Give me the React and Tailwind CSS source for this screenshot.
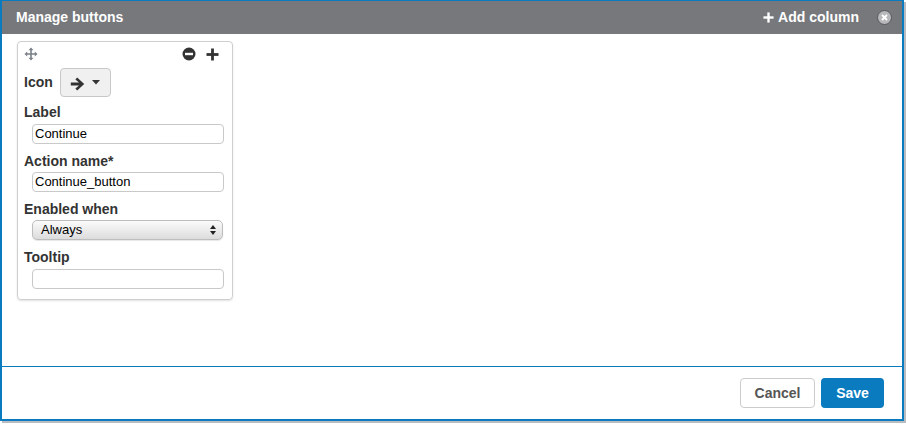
import React from "react";

const font = { fontFamily: '"Liberation Sans", Arial, sans-serif' };

function MoveIcon() {
  return (
    <svg width="14" height="14" viewBox="0 0 14 14" fill="#7a8088">
      <path d="M7 0.5 L9.5 3.2 H7.8 V6.2 H10.8 V4.5 L13.5 7 L10.8 9.5 V7.8 H7.8 V10.8 H9.5 L7 13.5 L4.5 10.8 H6.2 V7.8 H3.2 V9.5 L0.5 7 L3.2 4.5 V6.2 H6.2 V3.2 H4.5 Z" />
    </svg>
  );
}

function MinusCircle() {
  return (
    <svg width="14" height="14" viewBox="0 0 14 14">
      <circle cx="7" cy="7" r="6.5" fill="#333" />
      <rect x="3" y="5.8" width="8" height="2.4" fill="#fff" />
    </svg>
  );
}

function Plus({ color = "#333", size = 13 }) {
  return (
    <svg width={size} height={size} viewBox="0 0 13 13" fill={color}>
      <rect x="5.1" y="0.5" width="2.8" height="12" />
      <rect x="0.5" y="5.1" width="12" height="2.8" />
    </svg>
  );
}

function ArrowRight() {
  return (
    <svg width="15" height="14" viewBox="0 0 15 14" fill="#333">
      <path d="M7.2 0.6 L14.2 7 L7.2 13.4 L5.4 11.6 L9 8.4 H0.8 V5.6 H9 L5.4 2.4 Z" />
    </svg>
  );
}

export default function App() {
  return (
    <div className="w-[906px] h-[424px] bg-white relative" style={font}>
      <div className="w-[904px] h-[421px] border-2 border-t border-[#0b7bc0] bg-white flex flex-col shadow-[2px_2px_0_#b9bcc0]">
        <div className="h-[33px] bg-[#76787c] flex items-center pl-[14px] pr-[10px] shrink-0">
          <div className="text-white font-bold text-[14px]">Manage buttons</div>
          <div className="ml-auto flex items-center">
            <div className="flex items-center gap-[4px] text-white font-bold text-[14px]">
              <Plus color="#fff" size={11} />
              <span>Add column</span>
            </div>
            <div className="ml-[18px] w-[15px] h-[15px] rounded-full bg-[#b7b8ba] border border-[#55575b] flex items-center justify-center">
              <svg width="7" height="7" viewBox="0 0 7 7" stroke="#fff" strokeWidth="1.8">
                <path d="M1 1 L6 6 M6 1 L1 6" />
              </svg>
            </div>
          </div>
        </div>
        <div className="flex-1 pl-[15px] pt-[7px]">
          <div className="w-[216px] h-[259px] border border-[#cfcfcf] rounded-[4px] shadow-[0_1px_2px_rgba(0,0,0,0.12)] px-[6px] pt-[5px]">
            <div className="flex items-center h-[14px]">
              <MoveIcon />
              <div className="ml-auto flex items-center gap-[10px] pr-[7px]">
                <MinusCircle />
                <Plus />
              </div>
            </div>
            <div className="flex items-center mt-[7px]">
              <span className="text-[14px] font-bold text-[#333]">Icon</span>
              <div className="ml-[7px] w-[51px] h-[29px] bg-[#f0f0f0] border border-[#c8c8c8] rounded-[4px] flex items-center pl-[9px]">
                <div className="mt-[2px]"><ArrowRight /></div>
                <svg className="ml-[7px]" width="8" height="5" viewBox="0 0 8 5" fill="#333">
                  <path d="M0 0 H8 L4 4.5 Z" />
                </svg>
              </div>
            </div>
            <div className="text-[14px] font-bold text-[#333] mt-[7px] leading-[17px]">Label</div>
            <div className="ml-[8px] mt-[3px] w-[192px] h-[20px] border border-[#c9c9c9] rounded-[4px] text-[13px] text-black flex items-center px-[2px]">Continue</div>
            <div className="text-[14px] font-bold text-[#333] mt-[9px] leading-[17px]">Action name*</div>
            <div className="ml-[8px] mt-[2px] w-[192px] h-[20px] border border-[#c9c9c9] rounded-[4px] text-[13px] text-black flex items-center px-[2px]">Continue_button</div>
            <div className="text-[14px] font-bold text-[#333] mt-[9px] leading-[17px]">Enabled when</div>
            <div className="ml-[8px] mt-[2px] w-[191px] h-[20px] border border-[#bdbdbd] rounded-[5px] bg-gradient-to-b from-[#fbfbfb] to-[#dcdcdc] text-[13px] text-black flex items-center pl-[8px] pr-[6px] shadow-[0_1px_1px_rgba(0,0,0,0.1)]">
              <span>Always</span>
              <svg className="ml-auto" width="6" height="10" viewBox="0 0 6 10" fill="#222">
                <path d="M3 0 L6 4 H0 Z M0 6 H6 L3 10 Z" />
              </svg>
            </div>
            <div className="text-[14px] font-bold text-[#333] mt-[9px] leading-[17px]">Tooltip</div>
            <div className="ml-[8px] mt-[3px] w-[192px] h-[20px] border border-[#c9c9c9] rounded-[4px]"></div>
          </div>
        </div>
        <div className="h-[53px] border-t border-[#0b7bc0] flex items-center justify-end pr-[18px] gap-[6px] shrink-0">
          <div className="w-[75px] h-[30px] border border-[#cccccc] rounded-[4px] bg-white flex items-center justify-center text-[14px] font-bold text-[#555]">Cancel</div>
          <div className="w-[63px] h-[30px] rounded-[4px] bg-[#0b7bc0] flex items-center justify-center text-[14px] font-bold text-white">Save</div>
        </div>
      </div>
    </div>
  );
}
